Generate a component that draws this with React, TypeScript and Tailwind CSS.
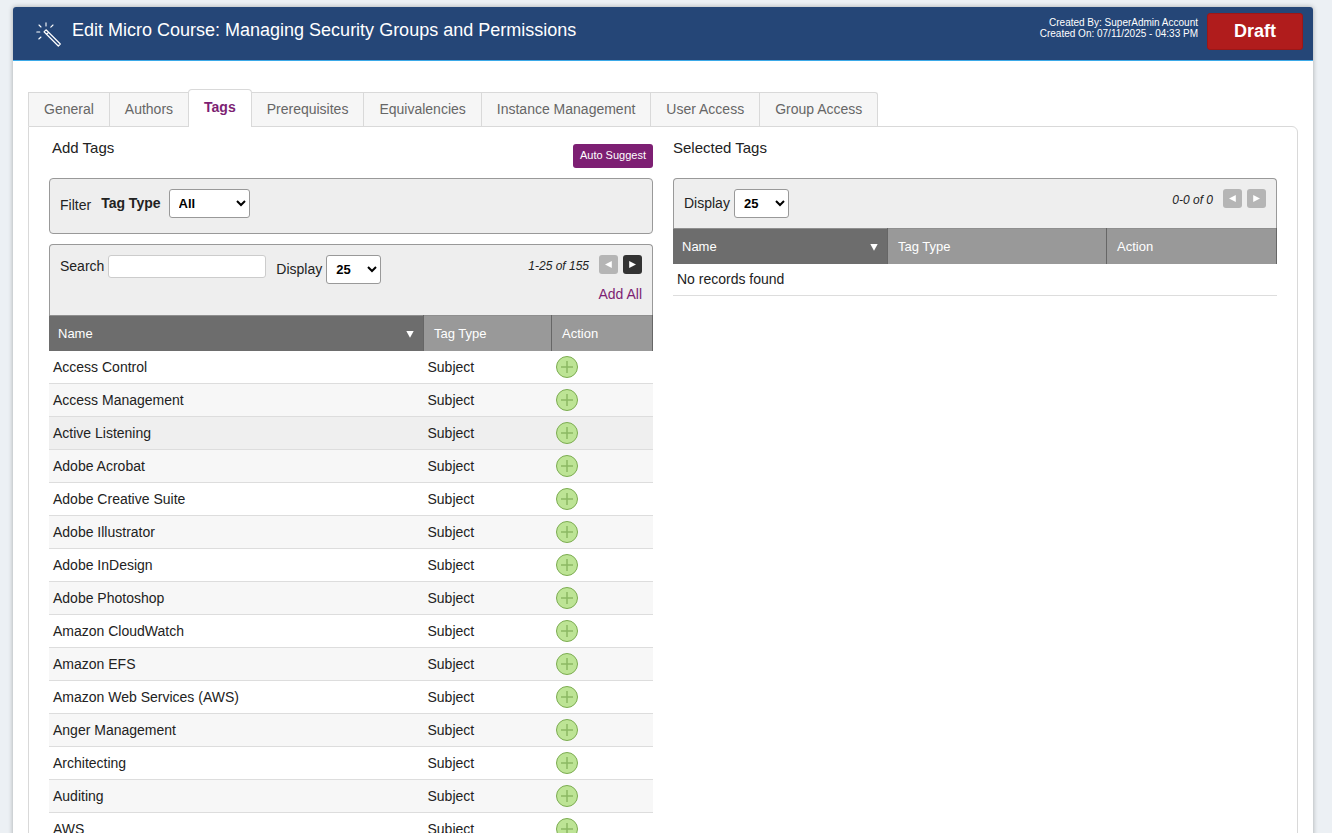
import { useState } from "react";

const tabs = [
  "General",
  "Authors",
  "Tags",
  "Prerequisites",
  "Equivalencies",
  "Instance Management",
  "User Access",
  "Group Access",
];

const tags = [
  "Access Control",
  "Access Management",
  "Active Listening",
  "Adobe Acrobat",
  "Adobe Creative Suite",
  "Adobe Illustrator",
  "Adobe InDesign",
  "Adobe Photoshop",
  "Amazon CloudWatch",
  "Amazon EFS",
  "Amazon Web Services (AWS)",
  "Anger Management",
  "Architecting",
  "Auditing",
  "AWS",
];

function WandIcon() {
  return (
    <svg width="26" height="26" viewBox="0 0 26 26" fill="none" stroke="#fff" strokeLinecap="round" aria-hidden="true">
      <path d="M10 7.8 L24.3 22 L22.3 24 L8 9.8 Z M12.5 10.3 L10.7 12.1" strokeWidth="1.2" strokeLinejoin="round" />
      <path d="M10 0.8 V4 M3 3 L5 5 M17 3 L14.8 5.2 M0.8 10 H3.8 M5 15 L2.8 17" strokeWidth="1.1" />
    </svg>
  );
}

function AddIcon() {
  return (
    <svg width="22" height="22" viewBox="0 0 22 22" fill="none" aria-hidden="true">
      <circle cx="11" cy="11" r="10.5" fill="#bde495" stroke="#7bac50" />
      <path d="M5 11 H17 M11 5 V17" stroke="#8cb863" strokeWidth="1.5" />
    </svg>
  );
}

function PageButton({ label, back, disabled }: { label: string; back?: boolean; disabled?: boolean }) {
  return (
    <button
      aria-label={label}
      disabled={disabled}
      className={`flex h-[19px] w-[19px] items-center justify-center rounded-[3px] ${disabled ? "bg-[#b5b5b5]" : "bg-[#333]"}`}
    >
      <svg width="7" height="7" viewBox="0 0 7 7" fill="#fff" aria-hidden="true">
        {back ? <path d="M6.8 0 V7 L0 3.5 Z" /> : <path d="M0.2 0 V7 L7 3.5 Z" />}
      </svg>
    </button>
  );
}

function Pager({ range, hasNext }: { range: string; hasNext?: boolean }) {
  return (
    <div className="flex items-start gap-[5px]">
      <span className="mr-[5px] text-xs leading-[22px] italic">{range}</span>
      <PageButton label="Previous page" back disabled />
      <PageButton label="Next page" disabled={!hasNext} />
    </div>
  );
}

function DisplaySelect({ id }: { id: string }) {
  return (
    <div className="flex items-center gap-1">
      <label htmlFor={id} className="pb-0.5">Display</label>
      <select id={id} defaultValue="25" className="h-[29px] w-[55px] rounded-[3px] border border-[#999] bg-white pl-[5px] text-[13px] font-bold text-black">
        <option>10</option>
        <option>25</option>
        <option>50</option>
      </select>
    </div>
  );
}

function HeadRow() {
  return (
    <tr className="h-[35px] border-t border-[#8f8f8f] bg-[#999] text-left text-[13px] text-white">
      <th className="border-r border-[#666] bg-[#6d6d6d] px-[9px] pt-0.5 font-normal">
        <div className="flex items-center justify-between">
          Name
          <svg width="8" height="7" viewBox="0 0 8 7" fill="#fff" aria-hidden="true">
            <path d="M0.3 0 H7.7 L4 6.8 Z" />
          </svg>
        </div>
      </th>
      <th className="border-r border-[#666] px-[10px] pt-0.5 font-normal">Tag Type</th>
      <th className="border-r border-[#666] px-[10px] pt-0.5 font-normal">Action</th>
    </tr>
  );
}

export default function App() {
  const [active, setActive] = useState("Tags");

  return (
    <div className="min-h-screen bg-[#ecf0f4] pt-[7px] pr-[19px] pl-[13px] font-['Liberation_Sans',Arial,sans-serif] text-sm text-[#222]">
      <div className="min-h-screen rounded-t-[3px] bg-white shadow-[0_0_5px_rgba(0,0,0,0.3)]">
        {/* Header */}
        <header className="flex h-[54px] items-start justify-between rounded-t-[3px] border-b border-[#3ba9e8] bg-[#254677] pr-[10px] pl-[23px] text-white">
          <div className="flex gap-[10px]">
            <span className="pt-[15px]">
              <WandIcon />
            </span>
            <h1 className="pt-[11px] text-lg leading-6">Edit Micro Course: Managing Security Groups and Permissions</h1>
          </div>
          <div className="flex gap-[9px] pt-[6px]">
            <div className="pt-1 text-right text-[10px] leading-[11px]">
              <p>Created By: SuperAdmin Account</p>
              <p>Created On: 07/11/2025 - 04:33 PM</p>
            </div>
            <button className="h-[37px] w-24 rounded-[3px] border border-[#9c1717] bg-[#b01c1c] pb-0.5 text-lg font-bold">Draft</button>
          </div>
        </header>

        <div className="px-[15px] pt-7">
          {/* Tabs */}
          <div role="tablist" className="flex items-end">
            {tabs.map((tab, i) =>
              tab === active ? (
                <button
                  key={tab}
                  role="tab"
                  aria-selected
                  className="relative -mb-px h-[38px] rounded-t border-x border-t border-[#d9d9d9] bg-white px-[15px] pb-1 font-bold text-[#7d1f73]"
                >
                  {tab}
                </button>
              ) : (
                <button
                  key={tab}
                  role="tab"
                  onClick={() => setActive(tab)}
                  className={`h-[34px] border-t border-[#d9d9d9] bg-[#f6f6f6] px-[15px] pb-0.5 text-[#666] ${tabs[i - 1] === active ? "" : "border-l"} ${i === tabs.length - 1 ? "rounded-tr-[3px] border-r" : ""}`}
                >
                  {tab}
                </button>
              )
            )}
          </div>

          <div className="grid grid-cols-2 gap-5 rounded-tr-md border border-[#d9d9d9] px-5 pt-[11px]">
            {/* Add Tags */}
            <section>
              <div className="flex h-10 items-start justify-between">
                <h2 className="pl-[3px] text-[15px] leading-5">Add Tags</h2>
                <button className="mt-[6px] h-6 rounded-[3px] bg-[#7d1f73] px-[7px] text-[11px] text-white">Auto Suggest</button>
              </div>

              <div className="flex h-14 items-start rounded border border-[#999] bg-[#eee] px-[10px] pt-[10px]">
                <span className="mr-[10px] pt-[6px]">Filter</span>
                <label htmlFor="tag-type" className="mr-2 pt-1 font-bold">Tag Type</label>
                <select id="tag-type" className="h-[29px] w-[81px] rounded-[3px] border border-[#999] bg-white pl-[5px] text-[13px] font-bold text-black">
                  <option>All</option>
                  <option>Subject</option>
                </select>
              </div>

              <div className="mt-[10px] h-[71px] rounded-t border border-b-0 border-[#999] bg-[#eee] px-[10px] pt-[10px]">
                <div className="flex items-start">
                  <label htmlFor="search" className="mr-1 pt-px">Search</label>
                  <input id="search" type="text" className="mr-[10px] h-[23px] w-[158px] rounded-[3px] border border-[#ccc] bg-white px-1" />
                  <DisplaySelect id="display-add" />
                  <div className="ml-auto">
                    <Pager range="1-25 of 155" hasNext />
                  </div>
                </div>
                <div className="text-right leading-5">
                  <a href="#" className="text-[#7d1f73]">Add All</a>
                </div>
              </div>

              <table className="w-full table-fixed">
                <colgroup>
                  <col />
                  <col className="w-32" />
                  <col className="w-[101px]" />
                </colgroup>
                <thead>
                  <HeadRow />
                </thead>
                <tbody>
                  {tags.map((tag) => (
                    <tr key={tag} className="h-[33px] border-b border-[#ddd] even:bg-[#f7f7f7] nth-3:bg-[#efefef]">
                      <td className="px-1">{tag}</td>
                      <td className="px-1">Subject</td>
                      <td className="px-1">
                        <button aria-label={`Add ${tag}`} className="block">
                          <AddIcon />
                        </button>
                      </td>
                    </tr>
                  ))}
                </tbody>
              </table>
            </section>

            {/* Selected Tags */}
            <section>
              <h2 className="h-10 text-[15px] leading-5">Selected Tags</h2>
              <div className="flex h-[50px] items-start justify-between rounded-t border border-b-0 border-[#999] bg-[#eee] px-[10px] pt-[10px]">
                <DisplaySelect id="display-selected" />
                <Pager range="0-0 of 0" />
              </div>
              <table className="w-full table-fixed">
                <colgroup>
                  <col />
                  <col className="w-[219px]" />
                  <col className="w-[170px]" />
                </colgroup>
                <thead>
                  <HeadRow />
                </thead>
                <tbody>
                  <tr className="h-8 border-b border-[#ddd]">
                    <td colSpan={3} className="px-1">No records found</td>
                  </tr>
                </tbody>
              </table>
            </section>
          </div>
        </div>
      </div>
    </div>
  );
}
